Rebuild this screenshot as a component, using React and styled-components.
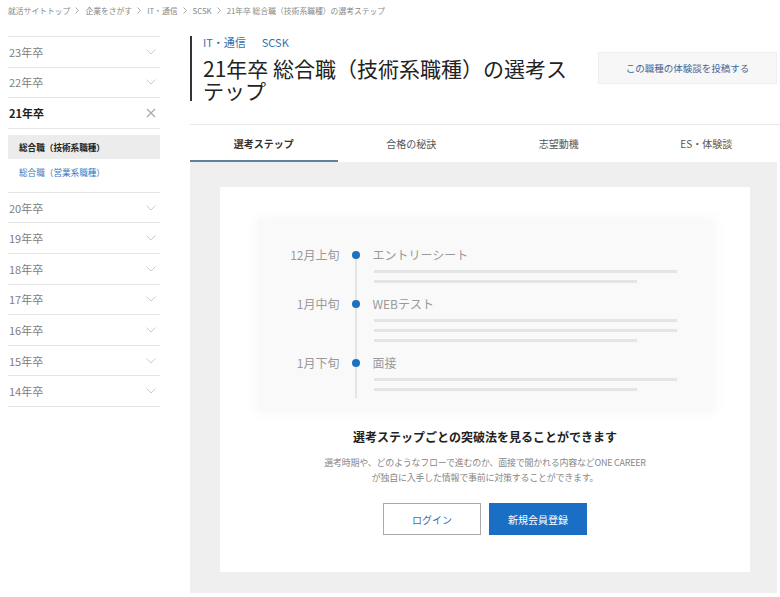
import styled, { createGlobalStyle } from 'styled-components'

const GlobalStyle = createGlobalStyle`
    body {
        margin: 0;
        background: #fff;
        font-family: "Noto Sans CJK JP", "Noto Sans", sans-serif;
        color: #333;
    }
`

const crumbs = ['就活サイトトップ', '企業をさがす', 'IT・通信', 'SCSK', '21年卒 総合職（技術系職種）の選考ステップ']
const years = ['23年卒', '22年卒', '21年卒', '20年卒', '19年卒', '18年卒', '17年卒', '16年卒', '15年卒', '14年卒']
const tabs = ['選考ステップ', '合格の秘訣', '志望動機', 'ES・体験談']
const steps = [
    { date: '12月上旬', title: 'エントリーシート', bars: 2 },
    { date: '1月中旬', title: 'WEBテスト', bars: 3 },
    { date: '1月下旬', title: '面接', bars: 2 },
]

const Page = styled.div`
    padding-left: 8px;
`

const Breadcrumb = styled.nav`
    display: flex;
    align-items: center;
    height: 20px;
    font-size: 7.8px;
    color: #888;
`

const Crumb = styled.span`
    white-space: nowrap;
`

const CrumbSep = styled.svg`
    margin: 0 6px 0 5px;
`

const Layout = styled.div`
    display: flex;
    gap: 30px;
    margin-top: 16px;
`

const Sidebar = styled.ul`
    list-style: none;
    margin: 0;
    padding: 0;
    width: 152px;
    border-top: 1px solid #e6e6e6;
    align-self: flex-start;
`

const YearRow = styled.li`
    display: flex;
    align-items: center;
    justify-content: space-between;
    height: 29.6px;
    padding: 0 4px 0 1px;
    border-bottom: 1px solid #e6e6e6;
    font-size: 11px;
    font-weight: ${(p) => (p.$open ? 700 : 400)};
    color: ${(p) => (p.$open ? '#222' : '#808080')};
`

const SubList = styled.li`
    display: flex;
    flex-direction: column;
    gap: 1px;
    padding: 6px 0 8px;
    border-bottom: 1px solid #e6e6e6;
`

const SubItem = styled.div`
    display: flex;
    align-items: center;
    height: 24px;
    padding-left: 11px;
    font-size: 8.6px;
    font-weight: ${(p) => (p.$active ? 700 : 400)};
    color: ${(p) => (p.$active ? '#222' : '#3b78c0')};
    background: ${(p) => (p.$active ? '#ececec' : 'transparent')};
`

const Main = styled.main`
    flex: 1;
    min-width: 0;
`

const Header = styled.div`
    display: flex;
    justify-content: space-between;
    align-items: flex-start;
    margin-bottom: 23px;
`

const TitleBlock = styled.div`
    border-left: 2px solid #333;
    padding-left: 11px;
    width: 375px;
`

const Category = styled.div`
    display: flex;
    gap: 16px;
    font-size: 11px;
    line-height: 13px;
    color: #3070b3;
`

const Title = styled.h1`
    margin: 8px 0 0;
    font-size: 21px;
    line-height: 22px;
    font-weight: 400;
    color: #222;
`

const PostButton = styled.button`
    margin: 16px 3px 0 0;
    width: 179px;
    height: 32px;
    background: #f7f7f7;
    border: 1px solid #eee;
    font-family: inherit;
    font-size: 9.5px;
    color: #40689a;
`

const Tabs = styled.div`
    display: flex;
    border-top: 1px solid #e8e8e8;
`

const Tab = styled.div`
    flex: 1;
    display: flex;
    align-items: center;
    justify-content: center;
    box-sizing: border-box;
    height: 37px;
    padding-top: 2px;
    border-bottom: 2px solid ${(p) => (p.$active ? '#5f7f9f' : 'transparent')};
    font-size: 10px;
    font-weight: ${(p) => (p.$active ? 700 : 400)};
    color: ${(p) => (p.$active ? '#333' : '#555')};
`

const Panel = styled.section`
    margin-right: 3px;
    background: #efefef;
    padding: 25px 27px 21px 30px;
`

const Card = styled.div`
    width: 530px;
    background: #fff;
    padding: 33px 0 37px;
    display: flex;
    flex-direction: column;
    align-items: center;
`

const Illustration = styled.div`
    width: 455px;
    box-sizing: border-box;
    padding: 26px 37px 7px 0;
    background: #f9f9f9;
    box-shadow: 0 0 12px 4px #f9f9f9;
`

const StepRow = styled.div`
    display: flex;
`

const StepDate = styled.div`
    width: 86px;
    box-sizing: border-box;
    padding-right: 4px;
    text-align: right;
    font-size: 12px;
    line-height: 18px;
    color: #999;
`

const Marker = styled.div`
    position: relative;
    width: 24px;
    flex-shrink: 0;

    &::before {
        content: '';
        position: absolute;
        left: 11px;
        width: 2px;
        top: ${(p) => (p.$first ? '9px' : '0')};
        bottom: ${(p) => (p.$last ? '5px' : '0')};
        background: #e4e4e4;
    }

    &::after {
        content: '';
        position: absolute;
        left: 8px;
        top: 5px;
        width: 8px;
        height: 8px;
        border-radius: 50%;
        background: #1f70c1;
    }
`

const StepBody = styled.div`
    flex: 1;
    padding: 0 0 12px 5px;
    display: flex;
    flex-direction: column;
    gap: 7px;
`

const StepTitle = styled.div`
    font-size: 12px;
    line-height: 18px;
    color: #999;
    margin-bottom: -1px;
`

const Bar = styled.div`
    height: 3px;
    margin-left: 1px;
    width: ${(p) => (p.$short ? '87%' : '100%')};
    background: #e4e4e4;
`

const Heading = styled.h2`
    margin: 18px 0 0;
    font-size: 12px;
    line-height: 18px;
    font-weight: 700;
    color: #222;
`

const Desc = styled.p`
    margin: 9px 0 0;
    font-size: 9px;
    line-height: 15px;
    letter-spacing: -0.25px;
    color: #888;
    text-align: center;
`

const Buttons = styled.div`
    display: flex;
    gap: 8px;
    margin-top: 18px;
`

const ActionButton = styled.button`
    width: 98px;
    height: 32px;
    font-family: inherit;
    font-size: 10px;
    border: ${(p) => (p.$primary ? 'none' : '1px solid #aaa')};
    background: ${(p) => (p.$primary ? '#1a6ec4' : '#fff')};
    color: ${(p) => (p.$primary ? '#fff' : '#3a6fb0')};
`

const Chevron = () => (
    <svg width="10" height="6" viewBox="0 0 10 6">
        <polyline points="0.5,0.5 5,5 9.5,0.5" fill="none" stroke="#ccc" strokeWidth="1" />
    </svg>
)

const Close = () => (
    <svg width="10" height="10" viewBox="0 0 10 10">
        <path d="M1 1 L9 9 M9 1 L1 9" stroke="#aaa" strokeWidth="1.2" />
    </svg>
)

const App = () => {
    return (
        <Page>
            <GlobalStyle />
            <Breadcrumb>
                {crumbs.map((c, i) => (
                    <Crumb key={c}>
                        {c}
                        {i < crumbs.length - 1 && (
                            <CrumbSep width="4" height="7" viewBox="0 0 4 7">
                                <polyline points="0.5,0.5 3.5,3.5 0.5,6.5" fill="none" stroke="#aaa" />
                            </CrumbSep>
                        )}
                    </Crumb>
                ))}
            </Breadcrumb>
            <Layout>
                <Sidebar>
                    {years.map((y) =>
                        y === '21年卒' ? (
                            [
                                <YearRow key={y} $open>
                                    {y}
                                    <Close />
                                </YearRow>,
                                <SubList key="sub">
                                    <SubItem $active>総合職（技術系職種）</SubItem>
                                    <SubItem>総合職（営業系職種）</SubItem>
                                </SubList>,
                            ]
                        ) : (
                            <YearRow key={y}>
                                {y}
                                <Chevron />
                            </YearRow>
                        )
                    )}
                </Sidebar>
                <Main>
                    <Header>
                        <TitleBlock>
                            <Category>
                                <span>IT・通信</span>
                                <span>SCSK</span>
                            </Category>
                            <Title>21年卒 総合職（技術系職種）の選考ステップ</Title>
                        </TitleBlock>
                        <PostButton>この職種の体験談を投稿する</PostButton>
                    </Header>
                    <Tabs>
                        {tabs.map((t, i) => (
                            <Tab key={t} $active={i === 0}>
                                {t}
                            </Tab>
                        ))}
                    </Tabs>
                    <Panel>
                        <Card>
                            <Illustration>
                                {steps.map((s, i) => (
                                    <StepRow key={s.date}>
                                        <StepDate>{s.date}</StepDate>
                                        <Marker $first={i === 0} $last={i === steps.length - 1} />
                                        <StepBody>
                                            <StepTitle>{s.title}</StepTitle>
                                            {Array.from({ length: s.bars }).map((_, j) => (
                                                <Bar key={j} $short={j === s.bars - 1} />
                                            ))}
                                        </StepBody>
                                    </StepRow>
                                ))}
                            </Illustration>
                            <Heading>選考ステップごとの突破法を見ることができます</Heading>
                            <Desc>
                                選考時期や、どのようなフローで進むのか、面接で聞かれる内容などONE CAREER
                                <br />
                                が独自に入手した情報で事前に対策することができます。
                            </Desc>
                            <Buttons>
                                <ActionButton>ログイン</ActionButton>
                                <ActionButton $primary>新規会員登録</ActionButton>
                            </Buttons>
                        </Card>
                    </Panel>
                </Main>
            </Layout>
        </Page>
    )
}

export default App
